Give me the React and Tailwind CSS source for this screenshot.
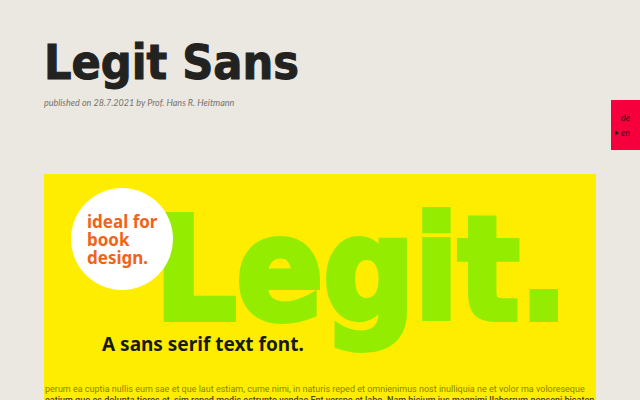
import React from 'react';

const languages = [
  { code: 'de', active: false },
  { code: 'en', active: true },
];

const LanguageSwitch = () => (
  <nav
    aria-label="Language"
    className="fixed right-0 top-[100px] w-[29px] h-[50px] bg-[#f5003c] pt-[10px] pr-[10px] text-right font-['Lato',sans-serif] italic text-[9px] leading-[15px] text-[#3a1018]"
  >
    {languages.map(({ code, active }) => (
      <a key={code} href={`#${code}`} className="flex items-center justify-end gap-[2px]">
        {active && (
          <svg viewBox="0 0 4 6" className="w-1 h-1.5" fill="#222" aria-hidden="true">
            <path d="M0 0L4 3L0 6Z" />
          </svg>
        )}
        {code}
      </a>
    ))}
  </nav>
);

const Poster = () => (
  <section className="relative bg-[#ffed00] pt-[6px]">
    <p className="pr-[28px] text-right whitespace-nowrap font-['DejaVu_Sans_Condensed','DejaVu_Sans',sans-serif] font-bold text-[142px] leading-[180px] text-[#94ed00] [-webkit-text-stroke:6px_#94ed00]">
      Legit.
    </p>
    <div className="absolute left-[27px] top-[14px] size-[102px] rounded-full bg-white pl-4 pt-[25px]">
      <p className="whitespace-nowrap font-['Noto_Sans',sans-serif] font-bold text-[17px] leading-[18px] text-[#f0641a]">
        ideal for
        <br />
        book
        <br />
        design.
      </p>
    </div>
    <h2 className="absolute left-[58px] top-[158px] whitespace-nowrap font-['Noto_Sans',sans-serif] font-bold text-[19px] leading-6 text-[#161a10]">
      A sans serif text font.
    </h2>
    <div className="pt-[24px] pl-px whitespace-nowrap font-['Roboto',sans-serif] text-[9px] leading-[11px]">
      <p className="text-[#8c8208]">
        perum ea cuptia nullis eum sae et que laut estiam, cume nimi, in naturis reped et omnienimus nost inulliquia ne et volor ma voloreseque
      </p>
      <p className="font-medium text-[#4a4508]">
        eatium quo es dolupta tiores et, sim reped modis estrunto vendae Ent verspe et labo. Nam hicium ius magnimi llaborrum nonseni bicaten
      </p>
    </div>
  </section>
);

const App = () => (
  <div className="min-h-screen bg-[#ebe7e1] px-11 pt-8">
    <LanguageSwitch />
    <header className="h-[142px]">
      <h1 className="whitespace-nowrap font-['DejaVu_Sans_Condensed','DejaVu_Sans',sans-serif] font-bold text-[48px] leading-[60px] text-[#222220] [-webkit-text-stroke:1px_#222220]">
        Legit Sans
      </h1>
      <p className="mt-1 font-['Lato',sans-serif] italic text-[9px] leading-[14px] text-[#77746f]">
        published on 28.7.2021 by Prof. Hans R. Heitmann
      </p>
    </header>
    <Poster />
  </div>
);

export default App;
